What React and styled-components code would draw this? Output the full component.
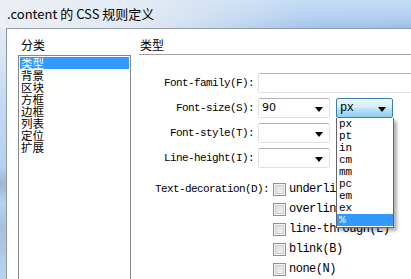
import React from "react";
import styled, { createGlobalStyle } from "styled-components";

const units = ["px", "pt", "in", "cm", "mm", "pc", "em", "ex", "%"];
const categories = ["类型", "背景", "区块", "方框", "边框", "列表", "定位", "扩展"];
const decorations = ["underline(U)", "overline(O)", "line-through(L)", "blink(B)", "none(N)"];

export default function App() {
  return (
    <Window>
      <GlobalStyle />
      <TitleBar>.content 的 CSS 规则定义</TitleBar>
      <Body>
        <Frame />
        <Content>
          <Sidebar>
            <SideLabel>分类</SideLabel>
            <ListBox>
              {categories.map((c, i) => (
                <ListItem key={c} selected={i === 0}>{c}</ListItem>
              ))}
            </ListBox>
          </Sidebar>
          <Main>
            <Heading>类型</Heading>
            <Form>
              <Label>Font-family(F):</Label>
              <TextBox wide />
              <Label>Font-size(S):</Label>
              <Cell>
                <Combo>
                  <ComboText>90</ComboText>
                  <Arrow />
                </Combo>
                <UnitWrap>
                  <Combo focused>
                    <UnitText>px</UnitText>
                    <Arrow />
                  </Combo>
                  <DropList>
                    {units.map((u) => (
                      <DropItem key={u} active={u === "%"}>{u}</DropItem>
                    ))}
                  </DropList>
                </UnitWrap>
              </Cell>
              <Label>Font-style(T):</Label>
              <Cell>
                <Combo>
                  <ComboText />
                  <Arrow />
                </Combo>
              </Cell>
              <Label>Line-height(I):</Label>
              <Cell>
                <Combo>
                  <ComboText />
                  <Arrow />
                </Combo>
              </Cell>
            </Form>
            <Decoration>
              <DecoLabel>Text-decoration(D):</DecoLabel>
              <CheckList>
                {decorations.map((d) => (
                  <CheckRow key={d}>
                    <CheckBox />
                    <CheckText>{d}</CheckText>
                  </CheckRow>
                ))}
              </CheckList>
            </Decoration>
          </Main>
        </Content>
      </Body>
    </Window>
  );
}

const GlobalStyle = createGlobalStyle`
  html, body {
    margin: 0;
    padding: 0;
    background: #ffffff;
    overflow: hidden;
  }
`;

const mono = `"Liberation Mono", "Courier New", monospace`;
const cjk = `"Noto Sans CJK SC", "Noto Sans", sans-serif`;

const Window = styled.div`
  width: 411px;
  height: 279px;
  display: flex;
  flex-direction: column;
  overflow: hidden;
`;

const TitleBar = styled.div`
  height: 28px;
  flex-shrink: 0;
  box-sizing: border-box;
  padding: 6px 0 0 7px;
  font-family: ${cjk};
  font-size: 13px;
  line-height: 16px;
  color: #000;
  background:
    linear-gradient(to right, rgba(236, 239, 244, 1) 0%, rgba(228, 235, 244, 0.95) 35%, rgba(190, 214, 242, 0.2) 75%, rgba(170, 202, 240, 0) 100%),
    linear-gradient(to bottom, #c6ddf6 0%, #b3d0f1 60%, #9dbfe8 100%);
`;

const Body = styled.div`
  flex: 1;
  display: flex;
  min-height: 0;
`;

const Frame = styled.div`
  width: 6px;
  flex-shrink: 0;
  background: linear-gradient(to bottom, #e4ebf4 0%, #c3daf3 30%, #b6d2f0 55%, #9fb8d3 62%, #b6d2f0 70%, #a7c0db 80%, #b9d4f1 100%);
`;

const Content = styled.div`
  flex: 1;
  display: flex;
  background: #ffffff;
  border-top: 1px solid #8f9aa8;
  border-left: 1px solid #8f9aa8;
  min-width: 0;
`;

const Sidebar = styled.div`
  width: 132px;
  flex-shrink: 0;
  display: flex;
  flex-direction: column;
  padding-left: 11px;
  box-sizing: border-box;
`;

const SideLabel = styled.div`
  margin: 9px 0 3px 3px;
  font-family: ${cjk};
  font-size: 12px;
  line-height: 14px;
`;

const ListBox = styled.div`
  flex: 1;
  width: 113px;
  box-sizing: border-box;
  border: 1px solid #828790;
  border-bottom: none;
  padding: 1px;
`;

const ListItem = styled.div`
  height: 12px;
  line-height: 12px;
  padding-left: 1px;
  font-family: ${cjk};
  font-size: 11.5px;
  color: ${(p) => (p.selected ? "#ffffff" : "#000000")};
  background: ${(p) => (p.selected ? "#3399ff" : "transparent")};
`;

const Main = styled.div`
  flex: 1;
  min-width: 0;
  display: flex;
  flex-direction: column;
`;

const Heading = styled.div`
  margin-top: 9px;
  padding: 0 0 2px 1px;
  line-height: 14px;
  font-family: ${cjk};
  font-size: 12px;
  border-bottom: 1px solid #a0a0a0;
`;

const Form = styled.div`
  margin-top: 18px;
  display: grid;
  grid-template-columns: 115px 1fr;
  grid-auto-rows: 20px;
  column-gap: 4px;
  row-gap: 5px;
`;

const Label = styled.div`
  font-family: ${mono};
  font-size: 11px;
  letter-spacing: -0.6px;
  line-height: 20px;
  text-align: right;
  color: #000;
`;

const TextBox = styled.div`
  width: ${(p) => (p.wide ? "170px" : "72px")};
  height: 20px;
  box-sizing: border-box;
  border: 1px solid #dfe3e8;
  border-top-color: #b3b6bd;
  border-radius: 2px;
  background: #fff;
`;

const Cell = styled.div`
  display: flex;
  gap: 6px;
  align-items: flex-start;
`;

const Combo = styled.div`
  width: ${(p) => (p.focused ? "57px" : "72px")};
  height: 20px;
  box-sizing: border-box;
  display: flex;
  align-items: center;
  justify-content: space-between;
  padding: 0 3px 0 3px;
  border: 1px solid ${(p) => (p.focused ? "#3c7fb1" : "#dde1e6")};
  border-top-color: ${(p) => (p.focused ? "#3c7fb1" : "#b3b6bd")};
  border-radius: 2px;
  background: ${(p) =>
    p.focused
      ? "linear-gradient(to bottom, #eaf6fd 0%, #d9f0fc 45%, #bee6fd 50%, #8fcdf0 100%)"
      : "#ffffff"};
`;

const ComboText = styled.span`
  font-family: "DejaVu Sans", "Liberation Sans", sans-serif;
  font-size: 11px;
  line-height: 18px;
  color: #000;
`;

const UnitText = styled.span`
  font-family: ${mono};
  font-size: 12px;
  letter-spacing: -0.5px;
  line-height: 18px;
  color: #000;
`;

const Arrow = styled.span`
  width: 0;
  height: 0;
  margin-right: 3px;
  margin-top: 2px;
  border-left: 4px solid transparent;
  border-right: 4px solid transparent;
  border-top: 5px solid #000;
`;

const UnitWrap = styled.div`
  position: relative;
`;

const DropList = styled.div`
  position: absolute;
  top: 20px;
  left: 0;
  width: 58px;
  box-sizing: border-box;
  border: 1px solid #646464;
  border-top: none;
  background: #fff;
  padding-bottom: 1px;
  box-shadow: 3px 3px 3px rgba(0, 0, 0, 0.3);
  z-index: 5;
`;

const DropItem = styled.div`
  height: 12px;
  line-height: 12px;
  padding-left: 2px;
  font-family: ${mono};
  font-size: 11px;
  color: ${(p) => (p.active ? "#ffffff" : "#000000")};
  background: ${(p) => (p.active ? "#3399ff" : "transparent")};
`;

const Decoration = styled.div`
  margin-top: 15px;
  display: flex;
  padding-left: 16px;
`;

const DecoLabel = styled.div`
  width: 118px;
  flex-shrink: 0;
  font-family: ${mono};
  font-size: 11px;
  letter-spacing: -0.6px;
  line-height: 13px;
  color: #000;
`;

const CheckList = styled.div`
  display: flex;
  flex-direction: column;
  gap: 7px;
`;

const CheckRow = styled.div`
  display: flex;
  align-items: center;
  gap: 3px;
  height: 13px;
`;

const CheckBox = styled.span`
  width: 13px;
  height: 13px;
  box-sizing: border-box;
  flex-shrink: 0;
  border: 1px solid #8e8f8f;
  background: #fff;
  box-shadow: inset 0 0 0 1px #f4f4f4, inset 0 0 0 2px #cfcfcf;
  background-image: linear-gradient(135deg, #d8d8d8 0%, #f4f4f4 100%);
`;

const CheckText = styled.span`
  font-family: ${mono};
  font-size: 12px;
  letter-spacing: -0.5px;
  line-height: 13px;
  white-space: nowrap;
  color: #000;
`;
